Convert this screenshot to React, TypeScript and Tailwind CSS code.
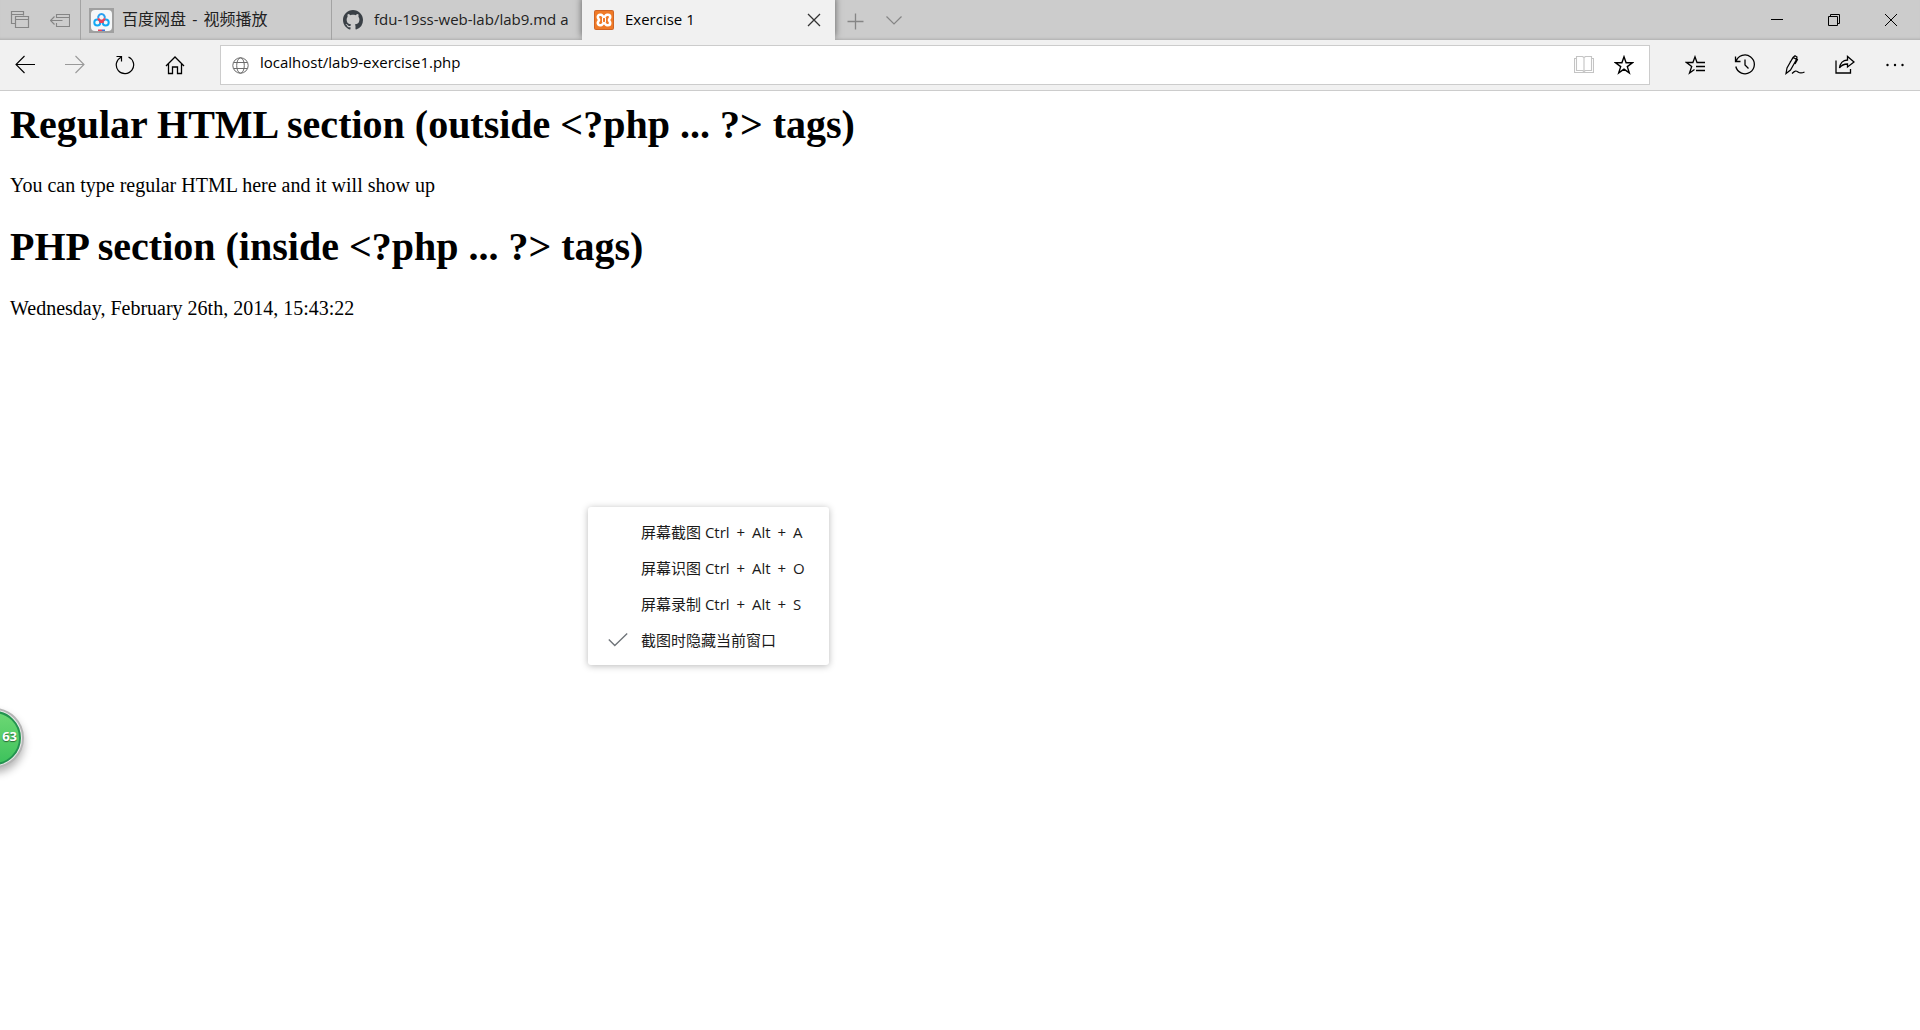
import React from "react";
import type { ReactNode } from "react";

const UI = "font-['Open_Sans','Noto_Sans_CJK_SC',sans-serif]";

type IconProps = { size?: number; children: ReactNode; className?: string };

function Icon({ size = 20, children, className = "" }: IconProps) {
  return (
    <svg
      width={size}
      height={size}
      viewBox={`0 0 ${size} ${size}`}
      fill="none"
      stroke="currentColor"
      className={`shrink-0 ${className}`}
      aria-hidden="true"
    >
      {children}
    </svg>
  );
}

function ToolButton({ label, className, children }: { label: string; className: string; children: ReactNode }) {
  return (
    <button type="button" aria-label={label} className={`flex h-full shrink-0 items-center justify-center ${className}`}>
      {children}
    </button>
  );
}

function NetdiskLogo() {
  return (
    <span className="mr-2 ml-2 flex size-[25px] shrink-0 items-center justify-center bg-[#a0a0a0]">
      <svg width="21" height="21" viewBox="0 0 21 21" aria-hidden="true">
        <rect width="21" height="21" rx="4" fill="#f5f7f8" />
        <g fill="none" strokeWidth="2">
          <circle cx="6.3" cy="12.4" r="3" stroke="#12a9f4" />
          <circle cx="14.7" cy="12.4" r="3" stroke="#12a9f4" />
          <path d="M7.300 8.200a3.300 3.300 0 1 1 6.400 0" stroke="#2aa0f0" />
          <path d="M7.300 8.200a3.300 3.300 0 0 0 6.400 0M8.300 12.300l2.200-1.500 2.200 1.500" stroke="#ee4258" />
        </g>
        <rect x="7" y="19.500" width="4" height="1.500" fill="#e8425a" />
        <rect x="11" y="19.500" width="3" height="1.500" fill="#3b6fd8" />
      </svg>
    </span>
  );
}

function GithubLogo() {
  return (
    <svg width="20" height="20" viewBox="0 0 16 16" fill="#3a4046" className="mr-[11px] ml-[11px] shrink-0" aria-hidden="true">
      <path d="M8 0C3.58 0 0 3.58 0 8c0 3.54 2.29 6.53 5.47 7.59.4.07.55-.17.55-.38 0-.19-.01-.82-.01-1.49-2.01.37-2.53-.49-2.69-.94-.09-.23-.48-.94-.82-1.13-.28-.15-.68-.52-.01-.53.63-.01 1.08.58 1.23.82.72 1.21 1.87.87 2.33.66.07-.52.28-.87.51-1.07-1.78-.2-3.64-.89-3.64-3.95 0-.87.31-1.59.82-2.15-.08-.2-.36-1.02.08-2.12 0 0 .67-.21 2.2.82.64-.18 1.32-.27 2-.27s1.36.09 2 .27c1.53-1.04 2.2-.82 2.2-.82.44 1.1.16 1.92.08 2.12.51.56.82 1.27.82 2.15 0 3.07-1.87 3.75-3.65 3.95.29.25.54.73.54 1.48 0 1.07-.01 1.93-.01 2.2 0 .21.15.46.55.38A8.01 8.01 0 0 0 16 8c0-4.42-3.58-8-8-8z" />
    </svg>
  );
}

function XamppLogo() {
  return (
    <svg width="20" height="20" viewBox="0 0 20 20" className="mr-[11px] ml-3 shrink-0" aria-hidden="true">
      <rect width="20" height="20" rx="2" fill="#cf6424" />
      <rect x="1" y="1" width="18" height="18" rx="1" fill="#f07a26" />
      <path
        d="M6 4.800H7.200C8.600 4.800 8.600 7 10 7s1.400-2.200 2.800-2.200H14a2.200 2.200 0 0 1 2.200 2.200c0 1.600-1.200 1.800-1.200 3s1.200 1.400 1.200 3a2.200 2.200 0 0 1-2.200 2.200h-1.200C11.400 15.200 11.400 13 10 13s-1.400 2.200-2.800 2.200H6A2.200 2.200 0 0 1 3.800 13c0-1.600 1.200-1.800 1.200-3S3.800 8.600 3.800 7A2.200 2.200 0 0 1 6 4.800z"
        fill="none"
        stroke="#fff"
        strokeWidth="2.600"
      />
      <path d="M8.500 7.500v5M11.500 7.500v5" stroke="#fff" strokeWidth="1" />
    </svg>
  );
}

function TitleBar() {
  return (
    <header className="flex h-10 items-stretch bg-[#ccc] shadow-[inset_0_-3px_3px_-2px_rgba(0,0,0,0.15)]">
      <ToolButton label="Tabs you have set aside" className="w-10 text-[#858585]">
        <Icon>
          <path d="M5.500 13.500h-4v-12h12v4M1.500 4.500h12M5.500 6.500h13v11h-13zM5.500 9.500h13" strokeWidth="1.200" />
        </Icon>
      </ToolButton>
      <ToolButton label="Set these tabs aside" className="w-10 text-[#858585]">
        <Icon>
          <path d="M6.500 8V4.500h13v12h-13V13M6.500 7.500h13M.5 10.500h12M4.500 6.500l-4 4 4 4" strokeWidth="1.100" />
        </Icon>
      </ToolButton>
      <nav className="flex items-stretch" aria-label="Tabs">
        <button type="button" className="flex w-[251px] items-center border-l border-[#a3a3a3] text-[#222]">
          <NetdiskLogo />
          <span className="truncate pb-0.5 text-[16px] leading-5">
            百度网盘 <span className="mx-0.5">-</span> 视频播放
          </span>
        </button>
        <button type="button" className="flex w-[251px] items-center border-l border-[#a3a3a3] pr-[14px] text-[#222]">
          <GithubLogo />
          <span className="overflow-hidden pb-0.5 text-[15px] leading-5 whitespace-nowrap">fdu-19ss-web-lab/lab9.md at master</span>
        </button>
        <div className="z-10 flex w-[253px] items-center bg-[#f1f1f1] text-black shadow-[0_-3px_7px_rgba(0,0,0,0.55)] [clip-path:inset(0_-10px_0_-10px)]">
          <button type="button" className="flex h-full grow items-center">
            <XamppLogo />
            <span className="pb-0.5 text-[15px] leading-5">Exercise 1</span>
          </button>
          <ToolButton label="Close tab" className="mr-[7px] w-7 text-[#333]">
            <Icon size={14}>
              <path d="M1 1l12 12M13 1L1 13" strokeWidth="1.300" />
            </Icon>
          </ToolButton>
        </div>
      </nav>
      <ToolButton label="New tab" className="w-10 pt-0.5 text-[#858585]">
        <Icon size={17}>
          <path d="M8.500 .5v16M.5 8.500h16" strokeWidth="1.300" />
        </Icon>
      </ToolButton>
      <ToolButton label="Tab actions" className="w-[38px] text-[#858585]">
        <Icon size={16}>
          <path d="M.5 4.500L8 12l7.500-7.500" strokeWidth="1.200" />
        </Icon>
      </ToolButton>
      <div className="ml-auto flex text-black">
        <ToolButton label="Minimize" className="w-[57px]">
          <Icon size={12}>
            <path d="M0 5.500h12" />
          </Icon>
        </ToolButton>
        <ToolButton label="Restore" className="w-[57px]">
          <Icon size={12}>
            <path d="M.5 2.500h9v9h-9zM2.500 2.500v-2h9v9h-2" />
          </Icon>
        </ToolButton>
        <ToolButton label="Close" className="w-[58px]">
          <Icon size={12}>
            <path d="M0 0l12 12M12 0L0 12" />
          </Icon>
        </ToolButton>
      </div>
    </header>
  );
}

function Toolbar() {
  return (
    <div className="flex h-[51px] items-center border-b border-[#ccc] bg-[#f1f1f1] text-black">
      <ToolButton label="Back" className="w-[50px]">
        <Icon>
          <path d="M1 9.500h19M9.500 1L1 9.500 9.500 18" strokeWidth="1.100" />
        </Icon>
      </ToolButton>
      <ToolButton label="Forward" className="w-[50px] text-[#999]">
        <Icon>
          <path d="M0 9.500h19M10.500 1l8.500 8.500-8.500 8.500" strokeWidth="1.100" />
        </Icon>
      </ToolButton>
      <ToolButton label="Refresh" className="w-[50px]">
        <Icon>
          <path d="M13.500 2a8.700 8.700 0 1 1-7.500.2M1.500 1.500h5v5" strokeWidth="1.200" />
        </Icon>
      </ToolButton>
      <ToolButton label="Home" className="w-[50px]">
        <Icon>
          <path d="M1 11L10 2l9 9M3.500 9v9.500h4v-6.500h5v6.500h4V9" strokeWidth="1.300" />
        </Icon>
      </ToolButton>
      <div className="ml-5 flex h-10 grow items-center border border-[#ccc] bg-white">
        <Icon size={17} className="ml-[11px] text-[#6c6c6c]">
          <circle cx="8.500" cy="8.500" r="7.700" />
          <ellipse cx="8.500" cy="8.500" rx="3.800" ry="7.700" />
          <path d="M1.500 5.500h14M1.500 11.500h14" />
        </Icon>
        <input
          type="text"
          aria-label="Address"
          defaultValue="localhost/lab9-exercise1.php"
          className="ml-[11px] h-full min-w-0 grow bg-transparent pb-1.5 text-[15px] outline-none"
        />
        <ToolButton label="Reading view" className="w-10 text-[#c4c4c4]">
          <Icon>
            <path d="M.5 3.500h2v-2h6l1.500 1 1.500-1h6v2h2v14h-19zM10 2.500v14M2.500 3v12.500h6l1.500 1 1.500-1h6V3" strokeWidth="1.100" />
          </Icon>
        </ToolButton>
        <ToolButton label="Add to favorites" className="mr-[5px] w-10">
          <Icon>
            <path d="M10 1.800l2.100 6h6.300l-5.100 3.800 2 6.300L10 14.100l-5.300 3.800 2-6.300L1.600 7.800h6.300z" strokeWidth="1.400" />
          </Icon>
        </ToolButton>
      </div>
      <div className="ml-5 flex h-full">
        <ToolButton label="Favorites" className="w-[50px]">
          <Icon>
            <path d="M20 7.500H12L10 1.800 7.900 7.500H1.500l5.200 4-2.200 6.500 5-3.500M11 11.500h9M11 15.500h9" strokeWidth="1.300" />
          </Icon>
        </ToolButton>
        <ToolButton label="History" className="w-[50px]">
          <Icon size={22}>
            <path d="M2 7.500A9.400 9.400 0 1 1 1.800 12.500M1.500 2.500v5H6.500M11 5.500v5.500l3.500 3.500" strokeWidth="1.300" />
          </Icon>
        </ToolButton>
        <ToolButton label="Add notes" className="w-[50px]">
          <Icon>
            <path d="M1 18.500L2 13 8 2.500 10 .8l2 1.200-.5 2.500L5.500 15 1 18.500zM5 7L8.500 2.500l3 2M11 3l1.500 1.500L10 9M7 18.500c3-3 4-3 6-1.500s3.500 1.500 6.500 0" strokeWidth="1.200" />
          </Icon>
        </ToolButton>
        <ToolButton label="Share" className="w-[50px]">
          <Icon>
            <path d="M1 5.500v12.500h14.500v-4M12.500 1.500V5C7.500 5 5 9 4.500 13c2-3 4.500-4 8-4v3L19 7z" strokeWidth="1.300" />
          </Icon>
        </ToolButton>
        <ToolButton label="Settings and more" className="w-[50px]">
          <Icon size={18}>
            <g fill="currentColor" stroke="none">
              <circle cx="1.500" cy="9" r="1.200" />
              <circle cx="9" cy="9" r="1.200" />
              <circle cx="16.500" cy="9" r="1.200" />
            </g>
          </Icon>
        </ToolButton>
      </div>
    </div>
  );
}

const menuItems = [
  { text: "屏幕截图", keys: ["Ctrl", "Alt", "A"], checked: false },
  { text: "屏幕识图", keys: ["Ctrl", "Alt", "O"], checked: false },
  { text: "屏幕录制", keys: ["Ctrl", "Alt", "S"], checked: false },
  { text: "截图时隐藏当前窗口", keys: [], checked: true },
];

function ContextMenu() {
  return (
    <div
      role="menu"
      className={`absolute top-[507px] left-[588px] w-[241px] rounded-[3px] bg-white py-[7px] text-[15px] text-[#1a1a1a] shadow-[0_1px_7px_rgba(0,0,0,0.28)] ${UI}`}
    >
      {menuItems.map((item) => (
        <button
          key={item.text}
          type="button"
          role={item.checked ? "menuitemcheckbox" : "menuitem"}
          aria-checked={item.checked ? true : undefined}
          className="flex h-9 w-full items-center whitespace-nowrap"
        >
          <span className="flex w-[53px] justify-end pr-[13px]">
            {item.checked && (
              <Icon size={20} className="text-[#70757a]">
                <path d="M.8 9.500l6 6L19.200 3.500" strokeWidth="1.400" />
              </Icon>
            )}
          </span>
          <span>
            {item.text}{" "}
            {item.keys.map((key, i) => (
              <React.Fragment key={key}>
                {i > 0 && (
                  <>
                    {" "}
                    <span className="mx-[3px]">+</span>{" "}
                  </>
                )}
                {key}
              </React.Fragment>
            ))}
          </span>
        </button>
      ))}
    </div>
  );
}

function FloatingBall() {
  return (
    <div className="absolute top-[708px] -left-9 flex size-[60px] items-center justify-center rounded-full border-2 border-[#b5b5b5] bg-[#ececec] shadow-[0_5px_9px_rgba(0,0,0,0.3)]">
      <div
        className={`flex size-[54px] items-center justify-end rounded-full border-2 border-[#249350] bg-linear-to-b from-[#6cd874] to-[#3cc25c] pr-0.5 pb-0.5 text-[13px] font-bold text-white [text-shadow:0_1px_1px_rgba(0,0,0,0.5)] ${UI}`}
      >
        63
      </div>
    </div>
  );
}

export default function App() {
  return (
    <div className="relative min-h-screen overflow-hidden bg-white">
      <div className={UI}>
        <TitleBar />
        <Toolbar />
      </div>
      <main className="px-[10px] pt-[11px] font-['Liberation_Serif',serif] text-black">
        <h1 className="text-[40px] leading-[46px] font-bold">Regular HTML section (outside &lt;?php ... ?&gt; tags)</h1>
        <p className="mt-[26px] text-[20px] leading-[23px]">You can type regular HTML here and it will show up</p>
        <h1 className="mt-[27px] text-[40px] leading-[46px] font-bold">PHP section (inside &lt;?php ... ?&gt; tags)</h1>
        <p className="mt-[27px] text-[20px] leading-[23px]">Wednesday, February 26th, 2014, 15:43:22</p>
      </main>
      <ContextMenu />
      <FloatingBall />
    </div>
  );
}
